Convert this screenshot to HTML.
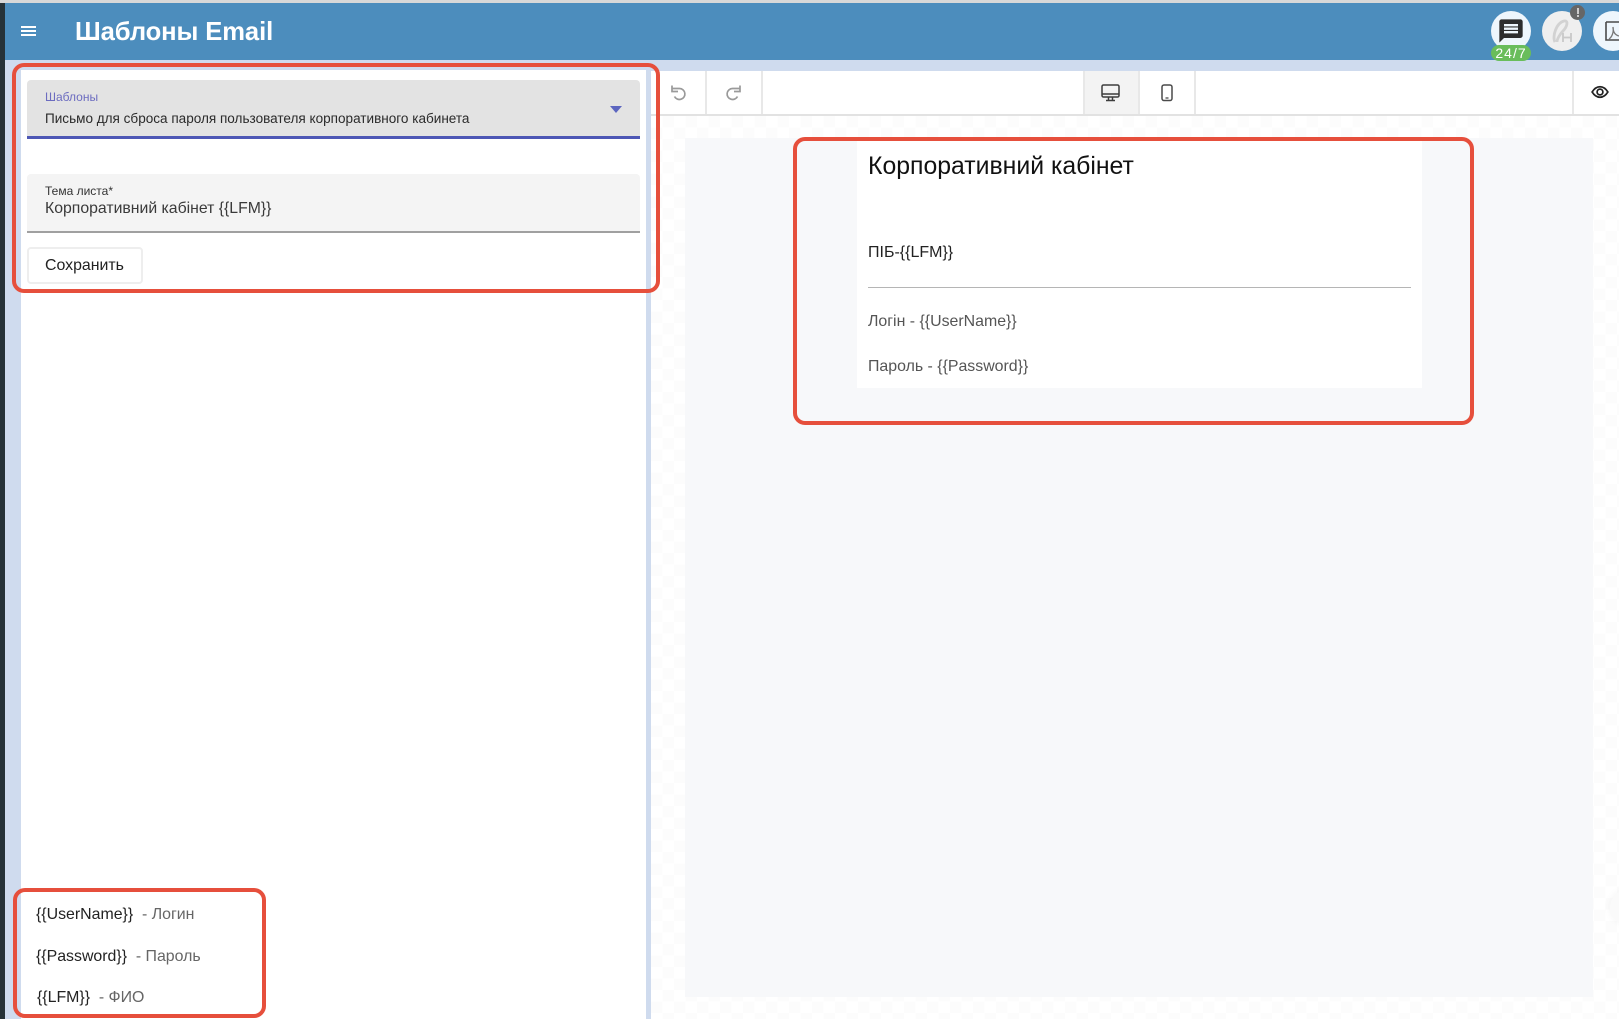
<!DOCTYPE html>
<html lang="ru">
<head>
<meta charset="utf-8">
<title>Шаблоны Email</title>
<style>
html,body{margin:0;padding:0;background:#fff}
body{width:1619px;height:1019px;position:relative;overflow:hidden;font-family:"Liberation Sans","DejaVu Sans",sans-serif;color:#222;filter:blur(.3px)}
div,svg,span{position:absolute;box-sizing:border-box}
.t{white-space:nowrap;line-height:1}
.red{border:4px solid #e64f3c;z-index:5;background:transparent}
.sep{top:71px;width:2px;height:43px;background:#e8e8e8}
b{font-weight:400;color:#222}
</style>
</head>
<body>
<div style="left:0;top:0;width:1619px;height:3px;background:#d8d8d8"></div>
<div style="left:5px;top:60px;width:1614px;height:959px;background:#cfdbee"></div>
<div style="left:0;top:3px;width:5px;height:1016px;background:#263238"></div>

<!-- header -->
<div style="left:5px;top:3px;width:1614px;height:57px;background:#4c8dbd"></div>
<svg style="left:21px;top:25px" width="15" height="12" viewBox="0 0 15 12"><path d="M0 2h15M0 6h15M0 10h15" stroke="#fff" stroke-width="2"/></svg>
<div class="t" style="left:75px;top:20px;font-size:25.600px;font-weight:700;color:#fff;letter-spacing:-.1px">Шаблоны Email</div>

<div style="left:1491px;top:11px;width:40px;height:40px;border-radius:50%;background:#eef6fc"></div>
<svg style="left:1497px;top:17px" width="28" height="28" viewBox="0 0 24 24"><path fill="#2d2d2d" d="M20 2H4c-1.100 0-2 .9-2 2v18l4-4h14c1.100 0 2-.9 2-2V4c0-1.100-.9-2-2-2zm-2 12H6v-2h12v2zm0-3H6V9h12v2zm0-3H6V6h12v2z"/></svg>
<div class="t" style="left:1491px;top:45px;width:40px;height:16px;border-radius:8px;background:#69bd5b;color:#fff;font-size:14px;text-align:center;line-height:16px;letter-spacing:1px">24/7</div>

<div style="left:1542px;top:11px;width:40px;height:40px;border-radius:50%;background:#efefef"></div>
<svg style="left:1542px;top:11px" width="40" height="40" viewBox="0 0 40 40"><path d="M13 31C10 26 14 12 22 10c5-1 3 6-1 10-3 3-6 8-6 11" fill="none" stroke="#d2d2d2" stroke-width="2.800"/><path d="M21 22v9M29 22v9M21 26.500h8" fill="none" stroke="#c9c9c9" stroke-width="1.800"/></svg>
<div style="left:1570px;top:5px;width:15px;height:15px;border-radius:50%;background:#666"></div>
<div style="left:1576.500px;top:8px;width:2px;height:6px;background:#ccc"></div>
<div style="left:1576.500px;top:15px;width:2px;height:2px;background:#ccc"></div>

<div style="left:1593px;top:11px;width:40px;height:40px;border-radius:50%;background:#eef6fc"></div>
<svg style="left:1605px;top:21px" width="14" height="21" viewBox="0 0 14 21"><path d="M1 1h13M1 1v18h13" fill="none" stroke="#4a4a4a" stroke-width="1.600"/><path d="M4 18c3-2 5-7 4-12 0 5 2 8 6 9" fill="none" stroke="#777" stroke-width="1.300"/></svg>

<!-- left panel -->
<div style="left:21px;top:70px;width:625px;height:949px;background:#fff"></div>
<div style="left:27px;top:80px;width:613px;height:59px;background:#e3e3e3;border-radius:4px 4px 0 0;border-bottom:3px solid #4d57b5"></div>
<div class="t" style="left:45px;top:91px;font-size:12px;color:#6c6cc0">Шаблоны</div>
<div class="t" style="left:45px;top:112px;font-size:13.560px;color:#2a2a2a">Письмо для сброса пароля пользователя корпоративного кабинета</div>
<svg style="left:610px;top:106px" width="12" height="7" viewBox="0 0 12 7"><path d="M0 0h12L6 7z" fill="#5c66c0"/></svg>

<div style="left:27px;top:174px;width:613px;height:59px;background:#f4f4f4;border-radius:4px 4px 0 0;border-bottom:2px solid #a0a0a0"></div>
<div class="t" style="left:45px;top:185px;font-size:12px;color:#333">Тема листа*</div>
<div class="t" style="left:45px;top:201px;font-size:15.800px;color:#3a3a3a">Корпоративний кабінет {{LFM}}</div>

<div style="left:27px;top:247px;width:116px;height:37px;background:#fff;border:2px solid #eee;border-radius:4px"></div>
<div class="t" style="left:45px;top:258px;font-size:15.900px;color:#222">Сохранить</div>

<div class="t" style="left:36px;top:907px;font-size:15.900px;color:#666"><b>{{UserName}}</b>&nbsp; - Логин</div>
<div class="t" style="left:36px;top:949px;font-size:15.900px;color:#666"><b>{{Password}}</b>&nbsp; - Пароль</div>
<div class="t" style="left:37px;top:990px;font-size:15.900px;color:#666"><b>{{LFM}}</b>&nbsp; - ФИО</div>

<!-- right panel -->
<div style="left:651px;top:71px;width:968px;height:43px;background:#fff"></div>
<div style="left:651px;top:114px;width:968px;height:2px;background:#e2e2e2"></div>
<div style="left:651px;top:116px;width:968px;height:903px;background-color:#fff;background-image:conic-gradient(#fcfcfc 25%,#fff 0 50%,#fcfcfc 0 75%,#fff 0);background-size:23px 23px"></div>
<div style="left:685px;top:138px;width:908px;height:859px;background:#f7f8fa"></div>
<div style="left:1610px;top:890px;width:34px;height:34px;border-radius:50%;background:#fafafa;box-shadow:0 0 8px rgba(0,0,0,.05)"></div>

<div style="left:1084px;top:71px;width:55px;height:43px;background:#f3f3f3"></div>
<div class="sep" style="left:705px"></div>
<div class="sep" style="left:761px"></div>
<div class="sep" style="left:1083px"></div>
<div class="sep" style="left:1138px"></div>
<div class="sep" style="left:1194px"></div>
<div class="sep" style="left:1572px"></div>

<svg style="left:668px;top:83px" width="20" height="20" viewBox="0 0 20 20"><path d="M4.500 5.500h7a5.500 5.500 0 1 1-5 8" fill="none" stroke="#9a9a9a" stroke-width="1.700"/><path d="M4 2.500v6h6" fill="none" stroke="#9a9a9a" stroke-width="1.700"/></svg>
<svg style="left:724px;top:83px" width="20" height="20" viewBox="0 0 20 20"><path d="M15.500 5.500h-7a5.500 5.500 0 1 0 5 8" fill="none" stroke="#9a9a9a" stroke-width="1.700"/><path d="M16 2.500v6h-6" fill="none" stroke="#9a9a9a" stroke-width="1.700"/></svg>

<svg style="left:1101px;top:84px" width="20" height="18" viewBox="0 0 20 18"><rect x="1" y="1" width="17" height="12" rx="1.500" fill="none" stroke="#3d3d3d" stroke-width="1.500"/><path d="M1 10h17M7.500 13v3M11.500 13v3M5 16.500h9" fill="none" stroke="#3d3d3d" stroke-width="1.500"/></svg>
<svg style="left:1160px;top:84px" width="14" height="18" viewBox="0 0 14 18"><rect x="2" y="1" width="10" height="15.500" rx="2" fill="none" stroke="#4a4a4a" stroke-width="1.500"/><path d="M5.500 14h3" stroke="#4a4a4a" stroke-width="1.300"/></svg>
<svg style="left:1591px;top:85px" width="18" height="14" viewBox="0 0 20 16"><path d="M1 8c2.500-4 5.500-6 9-6s6.500 2 9 6c-2.500 4-5.500 6-9 6s-6.500-2-9-6z" fill="none" stroke="#222" stroke-width="1.900"/><circle cx="10" cy="8" r="3.300" fill="none" stroke="#222" stroke-width="2"/></svg>

<!-- email card -->
<div style="left:857px;top:141px;width:565px;height:247px;background:#fff"></div>
<div class="t" style="left:868px;top:155px;font-size:24.800px;color:#111">Корпоративний кабінет</div>
<div class="t" style="left:868px;top:245px;font-size:16px;color:#222">ПІБ-{{LFM}}</div>
<div style="left:868px;top:287px;width:543px;height:1px;background:#b5b5b5"></div>
<div class="t" style="left:868px;top:314px;font-size:15.900px;color:#555">Логін - {{UserName}}</div>
<div class="t" style="left:868px;top:359px;font-size:15.900px;color:#555">Пароль - {{Password}}</div>

<!-- annotation boxes -->
<div class="red" style="left:12px;top:63px;width:648px;height:230px;border-radius:12px"></div>
<div class="red" style="left:793px;top:137px;width:681px;height:288px;border-radius:12px"></div>
<div class="red" style="left:13px;top:888px;width:253px;height:130px;border-radius:12px"></div>
</body>
</html>
